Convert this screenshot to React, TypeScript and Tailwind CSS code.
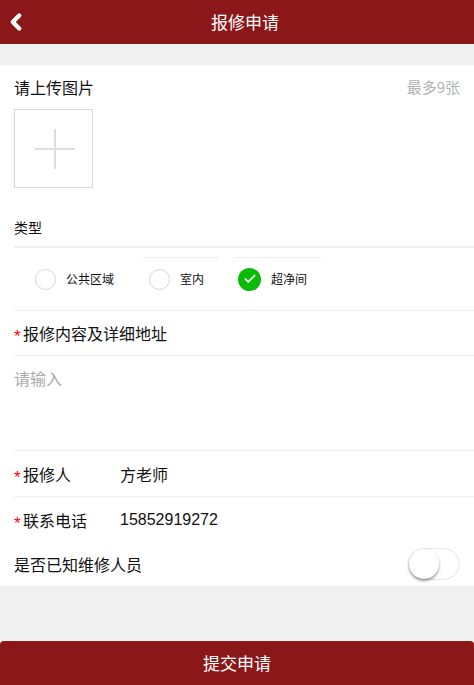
import { ChevronLeft, Check } from 'lucide-react'

const font = { fontFamily: '"Noto Sans CJK SC", "Liberation Sans", sans-serif' }

function Radio({ label, checked }: { label: string; checked?: boolean }) {
  return (
    <div className="flex items-center gap-[10px]">
      {checked ? (
        <span className="w-[23px] h-[23px] rounded-full bg-[#09bb07] flex items-center justify-center">
          <Check className="w-[14px] h-[14px] text-white" strokeWidth={3} />
        </span>
      ) : (
        <span className="w-[21px] h-[21px] rounded-full border border-[#d6d6d6] bg-white" />
      )}
      <span className="text-[12px] text-[#111]">{label}</span>
    </div>
  )
}

function Star() {
  return (
    <span
      className="text-[#f00] text-[17px] leading-[24px] w-[8px] h-[24px] mr-px translate-y-[4px]"
      style={{ fontFamily: '"Liberation Sans", sans-serif' }}
    >
      *
    </span>
  )
}

export default function App() {
  return (
    <div className="w-[474px] h-[685px] bg-[#f0f0f0] flex flex-col" style={font}>
      {/* Header */}
      <div className="h-[44px] bg-[#8b1718] flex items-center relative shrink-0">
        <ChevronLeft className="absolute left-[3px] w-[26px] h-[26px] text-white" strokeWidth={4} />
        <div className="flex-1 text-center text-white text-[17px] pl-[16px]">报修申请</div>
      </div>

      <div className="h-[21px] shrink-0" />

      {/* Form */}
      <div className="bg-white pl-[14px] shrink-0">
        <div className="flex items-center justify-between pr-[14px] h-[44px]">
          <span className="text-[16px] text-[#111]">请上传图片</span>
          <span className="text-[15px] text-[#b3b3b3]">最多9张</span>
        </div>
        <div className="w-[79px] h-[79px] border border-[#d9d9d9] relative">
          <span className="absolute left-[20px] top-[38px] w-[40px] h-[2px] bg-[#ddd]" />
          <span className="absolute left-[39px] top-[19px] w-[2px] h-[40px] bg-[#ddd]" />
        </div>

        {/* Type */}
        <div className="h-[60px] flex items-end pb-[8px] border-b-2 border-[#f0f0f0]">
          <span className="text-[14px] text-[#111]">类型</span>
        </div>
        <div className="relative h-[63px] flex items-center gap-[26px] pl-[21px] border-b border-[#eee]">
          <span className="absolute left-[129px] top-[9px] w-[76px] h-px bg-[#eee]" />
          <span className="absolute left-[220px] top-[9px] w-[87px] h-px bg-[#eee]" />
          <div className="w-[88px]"><Radio label="公共区域" /></div>
          <div className="w-[63px]"><Radio label="室内" /></div>
          <Radio label="超净间" checked />
        </div>

        {/* Content */}
        <div className="h-[45px] flex items-center border-b border-[#eee]">
          <Star />
          <span className="text-[16px] text-[#111]">报修内容及详细地址</span>
        </div>
        <div className="h-[95px] pt-[10px] border-b border-[#eee]">
          <span className="text-[16px] text-[#aaa]">请输入</span>
        </div>

        {/* Reporter */}
        <div className="h-[46px] flex items-center border-b border-[#eee]">
          <Star />
          <span className="text-[16px] text-[#111] w-[97px]">报修人</span>
          <span className="text-[16px] text-[#111]">方老师</span>
        </div>
        <div className="h-[45px] flex items-center">
          <Star />
          <span className="text-[16px] text-[#111] w-[97px]">联系电话</span>
          <span className="text-[16px] text-[#111] leading-[24px]" style={{ fontFamily: '"Liberation Sans", sans-serif' }}>15852919272</span>
        </div>
        <div className="h-[44px] flex items-center justify-between pr-[14px]">
          <span className="text-[16px] text-[#111]">是否已知维修人员</span>
          <span className="w-[52px] h-[32px] rounded-full border border-[#e5e5e5] bg-white relative">
            <span className="absolute left-0 top-0 w-[30px] h-[30px] rounded-full bg-white shadow-[0_2px_3px_rgba(0,0,0,0.4)]" />
          </span>
        </div>
      </div>

      <div className="flex-1" />

      <button className="h-[44px] shrink-0 bg-[#8b1718] text-white text-[17px] rounded-t-[4px]">提交申请</button>
    </div>
  )
}
